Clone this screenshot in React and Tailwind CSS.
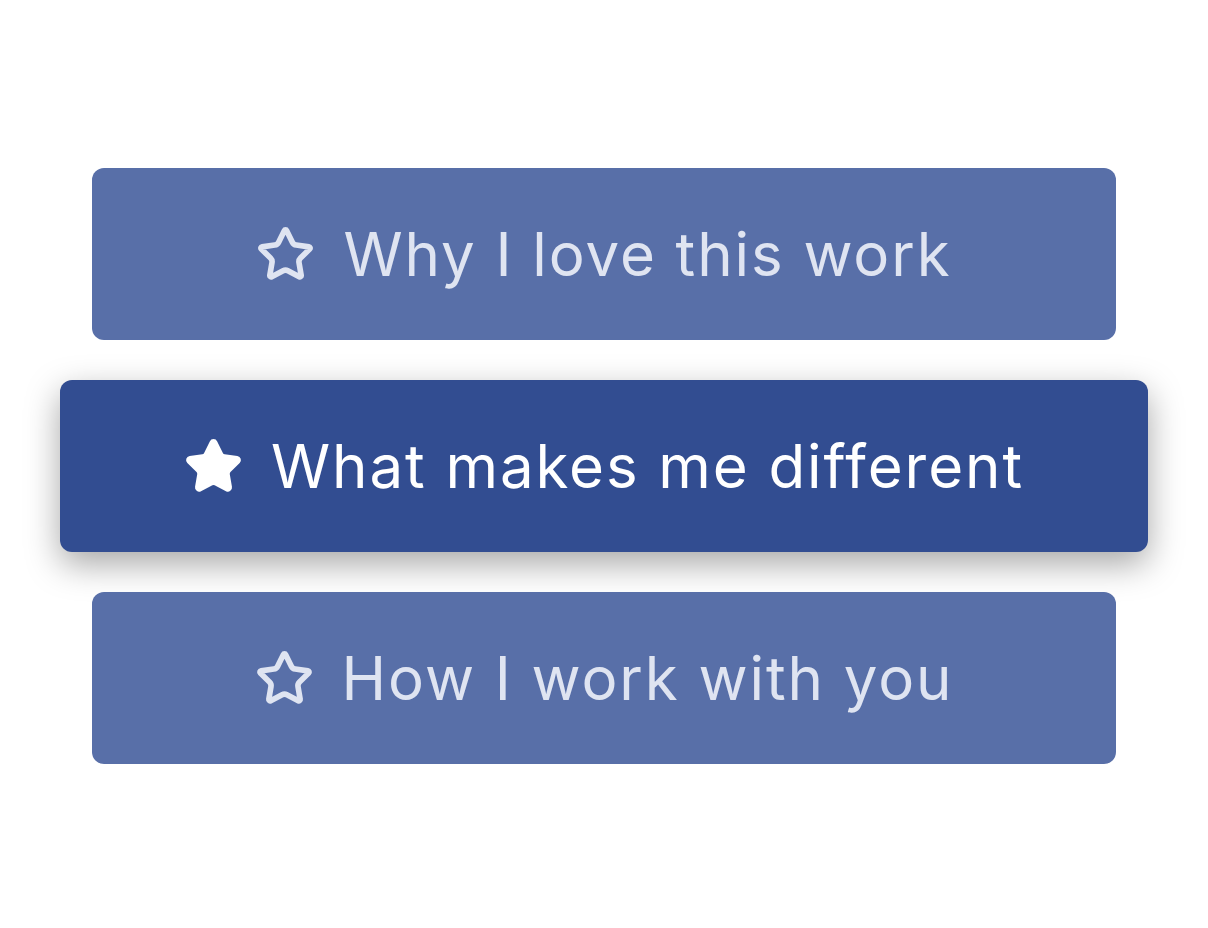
import { Star } from 'lucide-react';

const items = [
  { label: 'Why I love this work', active: false },
  { label: 'What makes me different', active: true },
  { label: 'How I work with you', active: false },
];

export default function App() {
  return (
    <div className="min-h-screen w-full bg-white pt-[168px]" style={{ fontFamily: 'Inter, "Noto Sans", sans-serif' }}>
      <div className="flex flex-col items-center gap-10">
        {items.map((item) => (
          <button
            key={item.label}
            className={
              item.active
                ? 'flex h-[172px] w-[1088px] items-center justify-center gap-[28px] rounded-xl bg-[#324d91] text-white shadow-[0_12px_34px_rgba(0,0,0,0.35)]'
                : 'flex h-[172px] w-[1024px] items-center justify-center gap-[28px] rounded-xl bg-[#586fa8] text-[#dfe4f1]'
            }
          >
            <Star
              size={59}
              strokeWidth={2.3}
              fill={item.active ? 'currentColor' : 'none'}
            />
            <span className="text-[60px] leading-none tracking-[0.032em]">{item.label}</span>
          </button>
        ))}
      </div>
    </div>
  );
}
